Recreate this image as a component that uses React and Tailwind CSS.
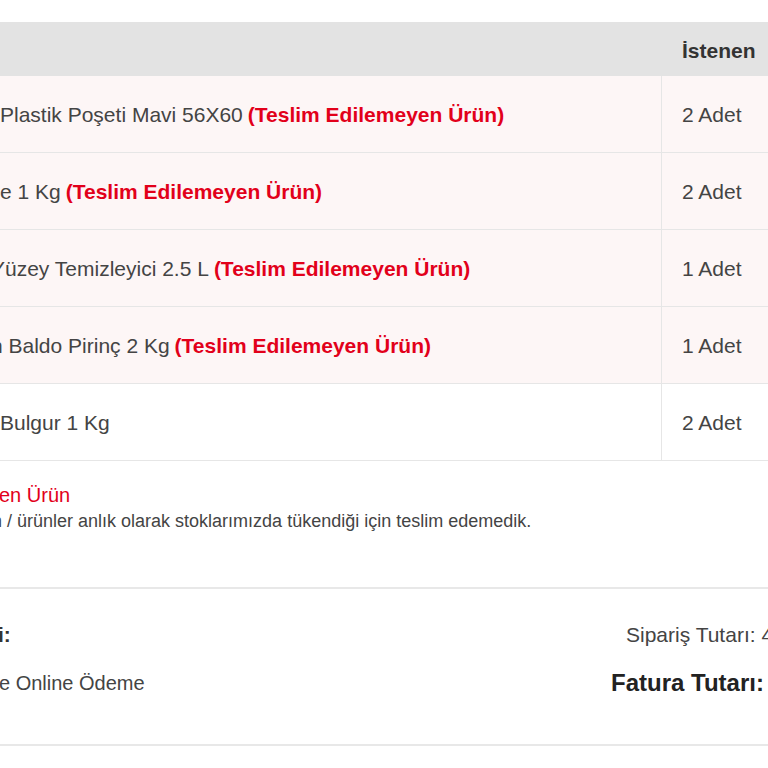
import React from "react";

const items = [
  { name: "Plastik Poşeti Mavi 56X60", qty: "2 Adet", missing: true, shift: "ml-0" },
  { name: "e 1 Kg", qty: "2 Adet", missing: true, shift: "ml-0" },
  { name: "Yüzey Temizleyici 2.5 L", qty: "1 Adet", missing: true, shift: "-ml-[9px]" },
  { name: "n Baldo Pirinç 2 Kg", qty: "1 Adet", missing: true, shift: "-ml-[9px]" },
  { name: "Bulgur 1 Kg", qty: "2 Adet", missing: false, shift: "ml-0" },
];

const App = () => {
  return (
    <div className="w-[768px] h-[768px] overflow-hidden bg-white font-['Liberation_Sans',Arial,sans-serif] text-[#444]">
      <div className="pt-[22px]">
        {/* table head */}
        <div className="flex h-[54px] items-center bg-[#e3e3e3] pt-[3px]">
          <div className="w-[663px] shrink-0" />
          <div className="pl-[19px] text-[21px] font-bold text-[#333] whitespace-nowrap">İstenen</div>
        </div>

        {/* rows */}
        {items.map((it, i) => (
          <div
            key={i}
            className={
              it.missing
                ? "flex h-[77px] border-b border-[#e6e6e6] bg-[#fdf6f6]"
                : "flex h-[77px] border-b border-[#e6e6e6] bg-white"
            }
          >
            <div className="flex w-[662px] shrink-0 items-center overflow-hidden border-r border-[#e6e6e6] pt-[1px] text-[21px] whitespace-nowrap">
              <span className={it.shift}>{it.name}</span>
              {it.missing && (
                <span className="ml-[5px] font-bold text-[#e2001a]">(Teslim Edilemeyen Ürün)</span>
              )}
            </div>
            <div className="flex items-center pl-[20px] pt-[1px] text-[21px] whitespace-nowrap">{it.qty}</div>
          </div>
        ))}

        {/* legend */}
        <div className="flex h-[128px] flex-col border-b-2 border-[#e8e8e8] pt-[21px]">
          <div className="-ml-[1px] text-[20px] leading-[26px] text-[#e2001a] whitespace-nowrap">en Ürün</div>
          <div className="-ml-[8px] text-[18px] leading-[26px] whitespace-nowrap">
            n / ürünler anlık olarak stoklarımızda tükendiği için teslim edemedik.
          </div>
        </div>

        {/* summary */}
        <div className="flex h-[157px] border-b-2 border-[#e8e8e8] pt-[32px]">
          <div className="flex flex-1 flex-col gap-[20px]">
            <div className="-ml-[2px] text-[21px] leading-[28px] font-bold text-[#333]">i:</div>
            <div className="-ml-[1px] text-[20px] leading-[28px] whitespace-nowrap">e Online Ödeme</div>
          </div>
          <div className="flex w-[157px] shrink-0 flex-col gap-[20px] whitespace-nowrap">
            <div className="pl-[15px] text-[21px] leading-[28px]">Sipariş Tutarı: 449,90 TL</div>
            <div className="text-[24px] leading-[28px] font-bold text-[#222]">Fatura Tutarı: 449,90 TL</div>
          </div>
        </div>
      </div>
    </div>
  );
};

export default App;
